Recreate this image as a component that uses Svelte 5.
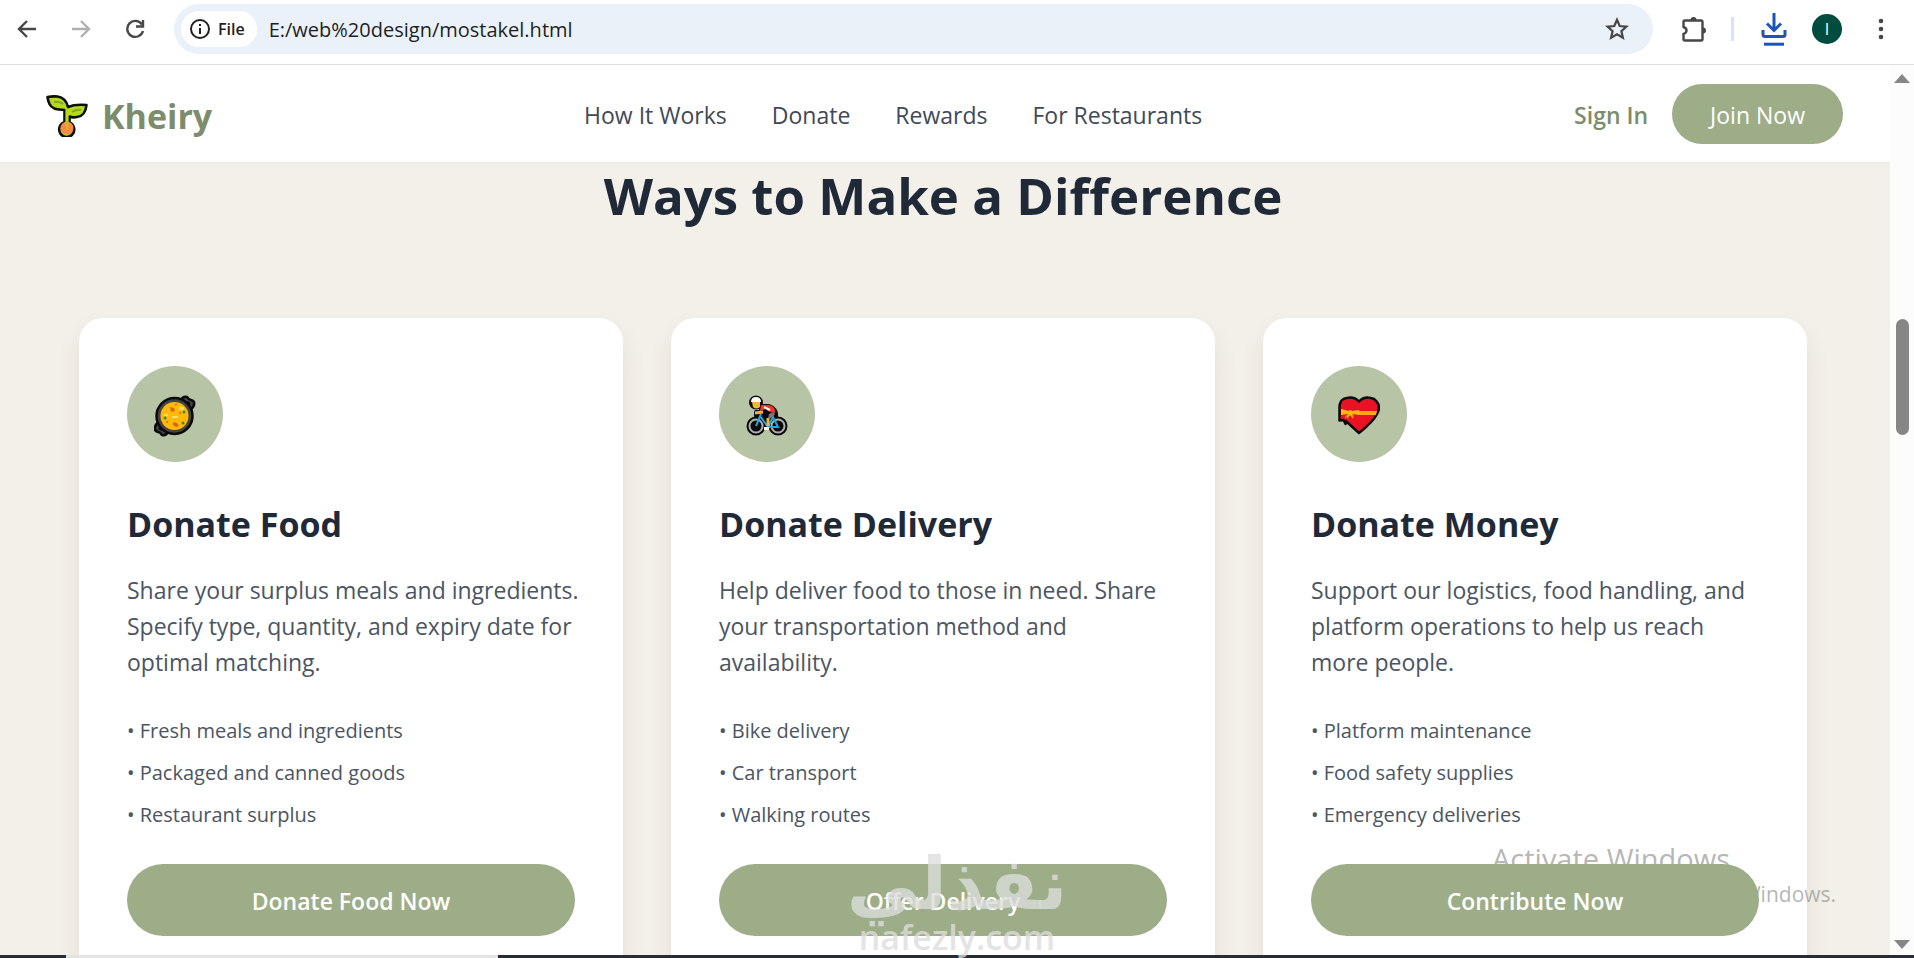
<script>
	const links = ['How It Works', 'Donate', 'Rewards', 'For Restaurants'];

	const ways = [
		{
			icon: 'food',
			title: 'Donate Food',
			text: 'Share your surplus meals and ingredients. Specify type, quantity, and expiry date for optimal matching.',
			points: ['Fresh meals and ingredients', 'Packaged and canned goods', 'Restaurant surplus'],
			cta: 'Donate Food Now'
		},
		{
			icon: 'delivery',
			title: 'Donate Delivery',
			text: 'Help deliver food to those in need. Share your transportation method and availability.',
			points: ['Bike delivery', 'Car transport', 'Walking routes'],
			cta: 'Offer Delivery'
		},
		{
			icon: 'money',
			title: 'Donate Money',
			text: 'Support our logistics, food handling, and platform operations to help us reach more people.',
			points: ['Platform maintenance', 'Food safety supplies', 'Emergency deliveries'],
			cta: 'Contribute Now'
		}
	];

	let address = $state('E:/web%20design/mostakel.html');
</script>

<div class="window">
	<header class="toolbar">
		<div class="history">
			<button class="tool" aria-label="Back">
				<svg width="20" height="20" viewBox="0 0 20 20" fill="none" stroke="#474747" stroke-width="2.4">
					<path d="M19 10H2M10 2L2 10l8 8" />
				</svg>
			</button>
			<button class="tool" aria-label="Forward">
				<svg width="20" height="20" viewBox="0 0 20 20" fill="none" stroke="#b0b0b0" stroke-width="2.4">
					<path d="M1 10h17M10 2l8 8-8 8" />
				</svg>
			</button>
			<button class="tool" aria-label="Reload">
				<svg width="20" height="20" viewBox="0 0 20 20" fill="none" stroke="#474747" stroke-width="2.4">
					<path d="M17 5.500A8 8 0 1 0 18 12" />
					<path d="M18 1v6.500h-7" />
				</svg>
			</button>
		</div>

		<div class="omnibox">
			<button class="scheme">
				<svg width="20" height="20" viewBox="0 0 20 20" fill="none" stroke="#1f1f1f" stroke-width="2">
					<circle cx="10" cy="10" r="9" />
					<path d="M10 9v6M10 5v2" />
				</svg>
				File
			</button>
			<input aria-label="Address" bind:value={address} />
			<button class="tool" aria-label="Bookmark">
				<svg width="24" height="24" viewBox="0 0 24 24" fill="none" stroke="#474747" stroke-width="2.2">
					<path d="M12 2.800l2.700 6.200 6.800.6-5.100 4.500 1.500 6.600-5.900-3.500-5.900 3.500 1.500-6.600L2.500 9.600l6.800-.6z" />
				</svg>
			</button>
		</div>

		<div class="actions">
			<button class="tool" aria-label="Extensions">
				<svg width="26" height="26" viewBox="0 0 26 26">
					<path
						d="M2.500 6Q2.500 4.500 4 4.500H20q1.500 0 1.500 1.500v17q0 1.500-1.500 1.500H4q-1.500 0-1.500-1.500v-5Q5.500 17 5.500 14.500T2.500 11z"
						fill="none"
						stroke="#474747"
						stroke-width="2.4"
					/>
					<path d="M9.500 4a3 3 0 0 1 6 0zM22 11.500a3 3 0 0 1 0 6z" fill="#474747" />
				</svg>
			</button>
			<span class="divider"></span>
			<button class="tool" aria-label="Downloads">
				<svg width="26" height="34" viewBox="0 0 26 34" fill="none" stroke="#1a56b8" stroke-width="3">
					<path d="M13 1v17M6 11.500l7 7 7-7" />
					<path d="M2 18v4.500q0 2 2 2h18q2 0 2-2V18" />
					<path d="M3 32.200h20" />
				</svg>
			</button>
			<button class="avatar" aria-label="Profile">I</button>
			<button class="tool" aria-label="Menu">
				<svg width="6" height="26" viewBox="0 0 6 26" fill="#474747">
					<circle cx="3" cy="5" r="2.300" />
					<circle cx="3" cy="13" r="2.300" />
					<circle cx="3" cy="21" r="2.300" />
				</svg>
			</button>
		</div>
	</header>

	<div class="viewport">
		<div class="page">
			<nav class="navbar">
				<a class="brand" href="#home">
					<svg width="42" height="42" viewBox="0 0 42 42" stroke="#0b0f05" stroke-width="2.600" stroke-linejoin="round">
						<path
							d="M1.500 2q5-1 10-.5Q20 3 22 12q7-3 18.500-2-1 11-9.500 12-4.500 1-7.500-.5v6a7.500 7.500 0 1 1-5-.2V15Q6 15 3.500 9 2 6 1.500 2z"
							fill="#b5d91c"
						/>
						<circle cx="21" cy="33" r="6.500" fill="#f98748" stroke="none" />
						<path d="M21 14v17" fill="none" stroke="#b5d91c" stroke-width="3" />
						<path d="M8 7q6-1 9 2M26 17q5-3 9-2" fill="none" stroke="#82a51c" stroke-width="2" />
						<path d="M21 26v9" fill="none" stroke="#dcae20" stroke-width="2" />
					</svg>
					<span>Kheiry</span>
				</a>
				<div class="links">
					{#each links as link}
						<a href="#section">{link}</a>
					{/each}
				</div>
				<div class="account">
					<a class="signin" href="#signin">Sign In</a>
					<button class="join">Join Now</button>
				</div>
			</nav>

			<section class="ways">
				<h2>Ways to Make a Difference</h2>
				<div class="cards">
					{#each ways as way}
						<article class="card">
							<div class="badge">
								{#if way.icon === 'food'}
									<svg width="42" height="42" viewBox="0 0 42 42">
										<g fill="#444" stroke="#0a0a0a" stroke-width="2.500">
											<path d="M27 5q2-4 6-3 2 3 4 3 4 1 3 5-1 4-5 5z" />
											<path d="M14 37q-2 4-6 3-2-3-4-3-4-1-3-5 1-4 5-5z" />
											<circle cx="20.500" cy="21" r="18" />
										</g>
										<path d="M33 7l3 2M5 33l3 2" stroke="#0a0a0a" stroke-width="2.500" />
										<circle cx="20.500" cy="21" r="14" fill="#ffb90a" />
										<g fill="#ffdf65">
											<path d="M25 12h5v3h-5zM10 19h4v2h-4zM18 21h6v2h-6z" />
										</g>
										<g fill="#dd6512">
											<path d="M16 12l4 1 1 3-4 1zM19 27l4 1 2 3-3 1-3-2z" />
											<circle cx="13" cy="27" r="1" />
											<circle cx="26" cy="18" r="1" />
											<circle cx="22" cy="9.500" r="1" />
										</g>
										<g fill="#348a1d">
											<circle cx="30" cy="17" r="1.500" />
											<circle cx="11" cy="23" r="1.500" />
											<circle cx="29" cy="28" r="1.500" />
										</g>
									</svg>
								{:else if way.icon === 'delivery'}
									<svg width="42" height="42" viewBox="0 0 42 42" fill="none">
										<g stroke="#0a0a0a" stroke-width="4" stroke-linejoin="round" fill="#0a0a0a">
											<circle cx="10" cy="31" r="7.500" />
											<circle cx="32" cy="31" r="7.500" />
											<circle cx="10" cy="7.500" r="5" />
											<path d="M14 11h9q8 3 7 11l-6 10h-5V21h-9v-4h6z" />
										</g>
										<g stroke="#b0b0b2" stroke-width="2">
											<circle cx="10" cy="31" r="6.500" />
											<circle cx="32" cy="31" r="6.500" />
										</g>
										<path d="M10 31l5-12M14 21l8 11h10l-5-10-5 10" stroke="#24a4d8" stroke-width="2" />
										<path d="M6 7h8v5q-4 3-7 0z" fill="#f5b33b" />
										<path d="M5 7q0-5 5-5t5 5z" fill="#fff" />
										<path d="M15 10h8q7 2 6 8-7-1-9-4l-6 2z" fill="#e63b21" />
										<path d="M18 12l6 3" stroke="#fff" stroke-width="2" />
										<path d="M23 19q4-3 6 0-2 4-7 5z" fill="#77777a" />
										<path d="M9 18l8-1M22 23v8" stroke="#f5b33b" stroke-width="3" />
										<path d="M18 32h5v3h-5z" fill="#fff" />
									</svg>
								{:else}
									<svg width="42" height="42" viewBox="0 0 42 42">
										<path
											d="M21 38l-11-10-2.500-2v3l-2-4-4 .5V12q0-6 4-8Q15 0 21 6.500 27 0 36 4q8 6 3 15-4 8-18 19z"
											fill="#e81224"
											stroke="#0a0a0a"
											stroke-width="2.500"
											stroke-linejoin="round"
										/>
										<path d="M21 16h18l-1 4H21z" fill="#f7a81b" />
										<path d="M3 14l8 2q1-2 3 0l7-1v5l-6-1v5l-3-4-3 4v-5l-6 1z" fill="#fdb813" />
										<path d="M10 19l-3 4M15 19v4" stroke="#d97b10" stroke-width="1.500" />
									</svg>
								{/if}
							</div>
							<h3>{way.title}</h3>
							<p>{way.text}</p>
							<ul>
								{#each way.points as point}
									<li>• {point}</li>
								{/each}
							</ul>
							<button class="cta">{way.cta}</button>
						</article>
					{/each}
				</div>
			</section>
		</div>

		<div class="scrollbar" aria-hidden="true">
			<span class="arrow up"></span>
			<span class="thumb"></span>
			<span class="arrow down"></span>
		</div>
	</div>

	<div class="taskbar"><span></span></div>

	<div class="activate">
		<strong>Activate Windows</strong>
		<span>Go to Settings to activate Windows.</span>
	</div>

	<div class="watermark">
		<span lang="ar" dir="rtl">نفذلي</span>
		<span>nafezly.com</span>
	</div>
</div>

<style>
	:global(body) {
		margin: 0;
	}

	.window {
		position: relative;
		display: flex;
		flex-direction: column;
		height: 100vh;
		overflow: hidden;
		background: #fff;
		color: #1f2937;
		font-family: 'Open Sans', 'Noto Sans', sans-serif;
	}

	button {
		border: 0;
		padding: 0;
		background: none;
		color: inherit;
		font: inherit;
		cursor: pointer;
	}

	a {
		color: inherit;
		text-decoration: none;
	}

	svg {
		display: block;
		flex: none;
	}

	/* browser toolbar */
	.toolbar {
		display: flex;
		flex: none;
		align-items: center;
		box-sizing: border-box;
		height: 65px;
		padding: 0 30px 6px 17px;
		border-bottom: 1px solid #dcdee0;
	}

	.history {
		display: flex;
		gap: 34px;
		margin-right: 29px;
	}

	.omnibox {
		display: flex;
		flex: 1;
		align-items: center;
		box-sizing: border-box;
		height: 50px;
		padding: 0 24px 0 7px;
		border-radius: 25px;
		background: #ebf1f9;
	}

	.scheme {
		display: flex;
		gap: 8px;
		align-items: center;
		height: 36px;
		padding: 0 12px 0 9px;
		border-radius: 18px;
		background: #fff;
		color: #1f1f1f;
		font-size: 16px;
		font-weight: 600;
	}

	.omnibox input {
		flex: 1;
		min-width: 0;
		padding: 0 12px;
		border: 0;
		outline: 0;
		background: none;
		color: #1f1f1f;
		font: inherit;
		font-size: 20px;
	}

	.actions {
		display: flex;
		align-items: center;
		margin-left: 28px;
	}

	.divider {
		width: 3px;
		height: 24px;
		margin: 0 27px 0 24px;
		background: #d3e3fd;
	}

	.avatar {
		width: 30px;
		height: 30px;
		margin: 0 36px 0 25px;
		border-radius: 50%;
		background: #004d40;
		color: #fff;
		font-size: 16px;
	}

	/* page */
	.viewport {
		display: flex;
		flex: 1;
		min-height: 0;
	}

	.page {
		flex: 1;
		min-width: 0;
		overflow: hidden;
		background: #f3f0e9;
	}

	.navbar {
		display: flex;
		align-items: center;
		justify-content: space-between;
		box-sizing: border-box;
		height: 98px;
		padding: 0 47px 0 46px;
		border-bottom: 1px solid #e8e8e6;
		background: #fff;
		color: #414957;
		font-size: 23px;
	}

	.brand {
		display: flex;
		gap: 14px;
		align-items: center;
		padding-top: 4px;
		color: #7d8c6b;
		font-size: 34px;
		font-weight: 700;
	}

	.links {
		display: flex;
		gap: 45px;
		padding-top: 3px;
	}

	.account {
		display: flex;
		gap: 24px;
		align-items: center;
	}

	.signin {
		padding-top: 3px;
		color: #7d8c6b;
		font-weight: 600;
	}

	.join {
		height: 60px;
		padding: 3px 38px 0;
		border-radius: 30px;
		background: #9dad87;
		color: #fff;
		font-weight: 500;
	}

	.ways {
		padding: 0 83px 48px 79px;
	}

	h2 {
		margin: 0 0 91px;
		font-size: 51px;
		line-height: 64px;
		text-align: center;
	}

	.cards {
		display: grid;
		grid-template-columns: repeat(3, minmax(0, 1fr));
		gap: 48px;
	}

	.card {
		padding: 48px;
		border-radius: 24px;
		background: #fff;
		box-shadow: 0 12px 24px rgba(60, 50, 30, 0.08);
	}

	.badge {
		display: grid;
		place-items: center;
		box-sizing: border-box;
		width: 96px;
		height: 96px;
		padding-top: 4px;
		border-radius: 50%;
		background: #b7c4a6;
	}

	h3 {
		margin: 38px 0 24px;
		font-size: 34px;
		line-height: 48px;
	}

	.card p {
		margin: 0 -6px 0 0;
		color: #4b5563;
		font-size: 23px;
		line-height: 36px;
	}

	ul {
		display: grid;
		gap: 12px;
		margin: 36px 0 34px;
		padding: 0;
		color: #4b5563;
		font-size: 20px;
		line-height: 30px;
		list-style: none;
	}

	/* sits above the activation notice */
	.cta {
		position: relative;
		z-index: 1;
		width: 100%;
		height: 72px;
		padding-top: 2px;
		border-radius: 36px;
		background: #9dad87;
		color: #fff;
		font-size: 23px;
		font-weight: 600;
	}

	/* scrollbar */
	.scrollbar {
		display: flex;
		flex-direction: column;
		align-items: center;
		width: 24px;
		padding: 9px 0 6px;
		box-sizing: border-box;
		background: #fcfcfc;
	}

	.arrow {
		border: 8px solid transparent;
	}

	.arrow.up {
		border-top: 0;
		border-bottom: 9px solid #868686;
	}

	.arrow.down {
		margin-top: auto;
		border-bottom: 0;
		border-top: 9px solid #868686;
	}

	.thumb {
		width: 13px;
		height: 116px;
		margin-top: 236px;
		border-radius: 7px;
		background: #868686;
	}

	.taskbar {
		flex: none;
		height: 3px;
		padding-left: 66px;
		background: #272c35;
	}

	.taskbar span {
		display: block;
		width: 432px;
		height: 3px;
		background: #e4e4e4;
	}

	/* overlays */
	.activate {
		position: absolute;
		right: 80px;
		bottom: 48px;
		display: grid;
		width: 342px;
		color: rgba(140, 140, 140, 0.65);
		white-space: nowrap;
		pointer-events: none;
	}

	.activate strong {
		font-size: 29px;
		font-weight: 400;
		line-height: 38px;
	}

	.activate span {
		justify-self: end;
		font-size: 21px;
		line-height: 32px;
	}

	.watermark {
		position: absolute;
		z-index: 2;
		left: 50%;
		bottom: 4px;
		display: grid;
		color: rgba(220, 221, 220, 0.8);
		text-align: center;
		transform: translateX(-50%);
		pointer-events: none;
	}

	.watermark span:first-child {
		font-family: 'DejaVu Sans', sans-serif;
		font-size: 72px;
		font-weight: 700;
		line-height: 72px;
	}

	.watermark span:last-child {
		font-size: 34px;
		font-weight: 600;
		line-height: 34px;
	}
</style>
